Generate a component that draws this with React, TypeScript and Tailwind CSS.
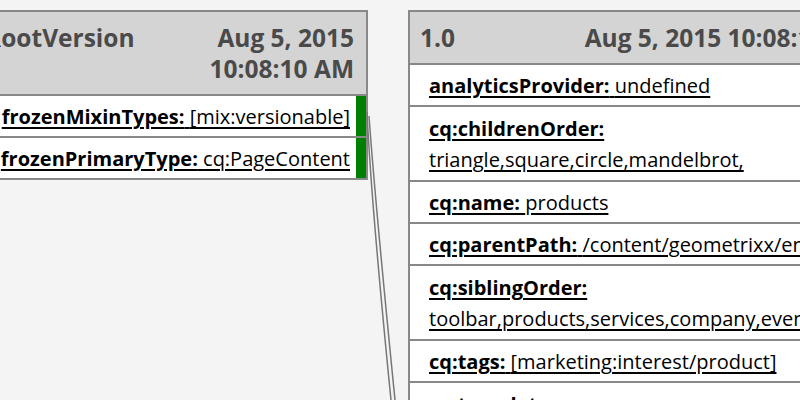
const leftRows = [
  { key: "frozenMixinTypes:", value: "[mix:versionable]" },
  { key: "frozenPrimaryType:", value: "cq:PageContent" },
];

const rightRows: { key: string; value: string; wrap?: boolean }[] = [
  { key: "analyticsProvider:", value: "undefined" },
  { key: "cq:childrenOrder:", value: "triangle,square,circle,mandelbrot,", wrap: true },
  { key: "cq:name:", value: "products" },
  { key: "cq:parentPath:", value: "/content/geometrixx/en" },
  { key: "cq:siblingOrder:", value: "toolbar,products,services,company,events,support,community", wrap: true },
  { key: "cq:tags:", value: "[marketing:interest/product]" },
  { key: "cq:template:", value: "/apps/geometrixx/templates/contentpage", wrap: true },
];

function Prop({ k, v, wrap }: { k: string; v: string; wrap?: boolean }) {
  return (
    <a className="text-black underline decoration-[1.5px] underline-offset-[3px] whitespace-nowrap">
      <span className="font-bold">{k}</span>
      {wrap ? <br /> : " "}
      <span>{v}</span>
    </a>
  );
}

export default function App() {
  return (
    <div className="relative h-[400px] w-[800px] overflow-hidden bg-[#f4f4f4] font-['Open_Sans',sans-serif]">
      <div className="flex items-start gap-[40px] pt-[10px] -ml-[29px]">
        {/* version panel (left) */}
        <div className="w-[397px] shrink-0 border-2 border-[#888] bg-white">
          <div className="flex justify-between items-start bg-[#d4d4d4] border-b-2 border-[#888] px-[12px] py-[10px] text-[24.5px] leading-[31px] font-bold text-[#4a4a4a] whitespace-nowrap">
            <span>RootVersion</span>
            <span className="text-right">
              Aug 5, 2015
              <br />
              10:08:10 AM
            </span>
          </div>
          {leftRows.map((r, i) => (
            <div key={r.key} className={`flex ${i > 0 ? "border-t-2 border-[#888]" : ""}`}>
              <div className="flex-1 flex justify-end overflow-hidden pr-[6px] pt-[6px] pb-[4px] text-[20px] leading-[30px]">
                <Prop k={r.key} v={r.value} />
              </div>
              <div className="w-[10px] bg-[#008000]" />
            </div>
          ))}
        </div>

        {/* version panel (right) */}
        <div className="w-[476px] shrink-0 border-2 border-[#888] bg-white">
          <div className="flex justify-between items-start bg-[#d4d4d4] border-b-2 border-[#888] px-[10px] py-[10px] text-[24.5px] leading-[31px] font-bold text-[#4a4a4a] whitespace-nowrap">
            <span>1.0</span>
            <span>Aug 5, 2015 10:08:10 AM</span>
          </div>
          {rightRows.map((r, i) => (
            <div
              key={r.key}
              className={`px-[19px] text-[20px] overflow-hidden ${r.wrap ? "pt-[6px] pb-[5px] leading-[31px]" : "pt-[6px] pb-[4px] leading-[30px]"} ${i > 0 ? "border-t-2 border-[#888]" : ""}`}
            >
              <Prop k={r.key} v={r.value} wrap={r.wrap} />
            </div>
          ))}
        </div>
      </div>

      {/* connector lines */}
      <svg className="absolute inset-0 pointer-events-none" width="800" height="400">
        <path d="M367 112 Q 371 200 391 400" fill="none" stroke="#777" strokeWidth="1.5" />
        <path d="M369 116 Q 375 200 395 400" fill="none" stroke="#777" strokeWidth="1.5" />
      </svg>
    </div>
  );
}
